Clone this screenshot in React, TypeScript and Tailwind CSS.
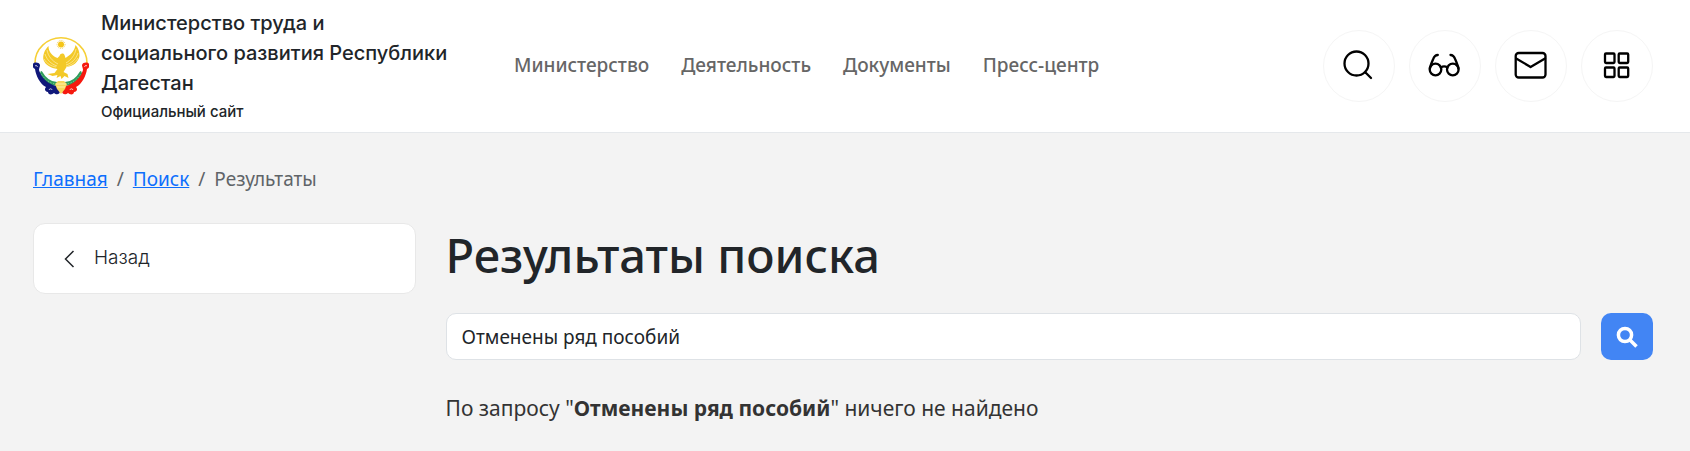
import { useState } from 'react';
import type { ReactNode } from 'react';

const navItems = ['Министерство', 'Деятельность', 'Документы', 'Пресс-центр'];

function Emblem() {
  return (
    <svg viewBox="0 0 56 58" className="w-14 shrink-0" aria-hidden="true">
      <path
        d="M2 26C2 12 14 .8 28 .8S54 12 54 26"
        fill="none"
        stroke="#f6cf35"
        strokeWidth="1.500"
      />
      <circle cx="28" cy="7.500" r="3" fill="#f5c518" />
      <circle
        cx="28"
        cy="7.500"
        r="4"
        fill="none"
        stroke="#f5d04a"
        strokeWidth="1"
        strokeDasharray="1 1"
      />
      <path
        d="M15.500 9c-4 4-6 9-5 14 2 5 7 8 14 9l-3 4-7 1 5 2 5-1-1 3 4-2 1 3 3-3 4 2-1-4-4-2 3-5c7-1 12-5 13-11 0-4-1-8-4-11-1 6-5 10-10 13l-1-3c-1-2-4-2-5 1l-2 2c-5-2-9-6-9-12z"
        fill="#f3c928"
      />
      <path
        d="M14 13c1 6 5 11 11 14M12 17c2 6 6 10 12 12M11 22c3 5 7 7 12 8M43 12c-1 6-5 11-10 14M45 16c-2 6-6 10-12 12M45 21c-3 5-7 7-12 9"
        fill="none"
        stroke="#fdeeb0"
        strokeWidth=".7"
      />
      <path
        d="M7 35c4 7 10 12 17 12M49 35c-4 7-10 12-17 12"
        fill="none"
        stroke="#2f9d5c"
        strokeWidth="4"
      />
      <path
        d="M7 35c4 7 10 12 17 12M49 35c-4 7-10 12-17 12"
        fill="none"
        stroke="#8fcfa6"
        strokeWidth="1"
        strokeDasharray="1 2"
      />
      <path
        d="M0 27c1-2 6-2 7 1 0 2-1 3-1 5 2 7 7 12 14 15 4 1 7 3 7 6 0 4-4 4-6 2-2 2-6 2-6-1-3 0-4-3-2-5C7 47 3 39 2 32c-2-1-3-3-2-5z"
        fill="#10187a"
      />
      <path
        d="M56 27c-1-2-6-2-7 1 0 2 1 3 1 5-2 7-7 12-14 15-4 1-7 3-7 6 0 4 4 4 6 2 2 2 6 2 6-1 3 0 4-3 2-5 6-3 10-11 11-18 2-1 3-3 2-5z"
        fill="#f5190f"
      />
      <path d="M22 47l3-3h6l3 3-2 5-4 5-4-5z" fill="#f7d75c" />
      <path
        d="M23 47h10M24 50h8"
        fill="none"
        stroke="#fff0a8"
        strokeWidth="1"
      />
      <path
        d="M2 29c1-1 3 0 2 1M16 53c1-2 3-1 3 0M54 29c-1-1-3 0-2 1M40 53c-1-2-3-1-3 0"
        fill="none"
        stroke="#fff"
        strokeWidth=".8"
      />
    </svg>
  );
}

function RoundButton({ label, children }: { label: string; children: ReactNode }) {
  return (
    <button
      type="button"
      aria-label={label}
      className="flex size-[72px] items-center justify-center rounded-full border border-[#f5f5f5] text-black"
    >
      <svg
        viewBox="0 0 36 36"
        className="size-9"
        fill="none"
        stroke="currentColor"
        strokeWidth="2.300"
        strokeLinecap="round"
        strokeLinejoin="round"
      >
        {children}
      </svg>
    </button>
  );
}

function Header() {
  return (
    <header className="flex items-center border-b border-[#e5e8eb] bg-white py-2 pr-[37px] pl-[33px]">
      <a
        href="#"
        className="flex w-[481px] shrink-0 items-center gap-3 font-['Inter',sans-serif] font-medium text-[#212529]"
      >
        <Emblem />
        <span className="w-[356px]">
          <span className="block text-xl leading-[30px]">
            Министерство труда и<br />
            социального развития Республики Дагестан
          </span>
          <span className="block pt-0.5 text-[15px] leading-6">
            Официальный сайт
          </span>
        </span>
      </a>
      <nav className="flex grow gap-8 pb-0.5 text-[19px] font-medium text-[#666]">
        {navItems.map((item) => (
          <a key={item} href="#">
            {item}
          </a>
        ))}
      </nav>
      <div className="flex gap-3.5">
        <RoundButton label="Поиск">
          <circle cx="15.500" cy="15.500" r="12" />
          <path d="M24.500 24.500l5.500 5.500" />
        </RoundButton>
        <RoundButton label="Версия для слабовидящих">
          <circle cx="8.500" cy="21.500" r="5.800" />
          <circle cx="25.800" cy="21.500" r="5.800" />
          <path d="M13.800 19.500c2-1.300 4.700-1.300 6.700 0M2.900 20.500c.3-2.500 1.800-6 3.300-9.500 1-2.600 2.300-4 4.600-4M31.400 20.500c-.3-2.500-1.800-6-3.300-9.500-1-2.600-2.300-4-4.600-4" />
        </RoundButton>
        <RoundButton label="Написать письмо">
          <rect x="2.700" y="5" width="29.800" height="24.500" rx="3" />
          <path d="M3.200 10.500l14.400 8.500 14.400-8.500" />
        </RoundButton>
        <RoundButton label="Меню">
          <rect x="6" y="5.500" width="9.500" height="9.500" rx="1" />
          <rect x="19.700" y="5.500" width="9.500" height="9.500" rx="1" />
          <rect x="6" y="19.500" width="9.500" height="9.500" rx="1" />
          <rect x="19.700" y="19.500" width="9.500" height="9.500" rx="1" />
        </RoundButton>
      </div>
    </header>
  );
}

export default function App() {
  const [query, setQuery] = useState('Отменены ряд пособий');

  return (
    <div className="min-h-screen bg-[#f3f3f3] font-['Noto_Sans',sans-serif] text-[#212529]">
      <Header />
      <div className="pt-8 pr-[37px] pb-7 pl-[33px]">
        <nav
          aria-label="Навигация"
          className="flex gap-[9px] text-[19px] leading-7 text-[#5f6468]"
        >
          <a href="#" className="text-[#0d6efd] underline">
            Главная
          </a>
          <span>/</span>
          <a href="#" className="text-[#0d6efd] underline">
            Поиск
          </a>
          <span>/</span>
          <span>Результаты</span>
        </nav>
        <div className="mt-[30px] grid grid-cols-4 items-start gap-[30px]">
          <a
            href="#"
            className="flex h-[71px] items-center gap-4 rounded-xl border border-[#e8e8e8] bg-white px-7 font-['Inter',sans-serif] text-[19px] font-light"
          >
            <svg
              viewBox="0 0 16 20"
              className="h-5 w-4"
              fill="none"
              stroke="currentColor"
              strokeWidth="1.500"
              aria-hidden="true"
            >
              <path d="M11.500 2L3.500 10l8 8" />
            </svg>
            Назад
          </a>
          <main className="col-span-3">
            <h1 className="text-[47px] leading-[64px] font-medium">
              Результаты поиска
            </h1>
            <form
              className="mt-[26px] flex gap-5"
              onSubmit={(e) => e.preventDefault()}
            >
              <input
                type="text"
                aria-label="Поисковый запрос"
                value={query}
                onChange={(e) => setQuery(e.target.value)}
                className="h-[47px] min-w-0 grow rounded-[10px] border border-[#dee2e6] bg-white px-[15px] text-[19px]"
              />
              <button
                type="submit"
                aria-label="Найти"
                className="flex h-[47px] w-[52px] items-center justify-center rounded-[10px] bg-[#4285f4] text-white"
              >
                <svg
                  viewBox="0 0 22 22"
                  className="size-[22px]"
                  fill="none"
                  stroke="currentColor"
                  strokeWidth="3.500"
                  aria-hidden="true"
                >
                  <circle cx="9" cy="9" r="6.600" />
                  <path d="M14 14l6.500 6.500" />
                </svg>
              </button>
            </form>
            <p className="mt-8 text-[21px] leading-8 text-[#333]">
              По запросу "<b>Отменены ряд пособий</b>" ничего не найдено
            </p>
          </main>
        </div>
      </div>
    </div>
  );
}
